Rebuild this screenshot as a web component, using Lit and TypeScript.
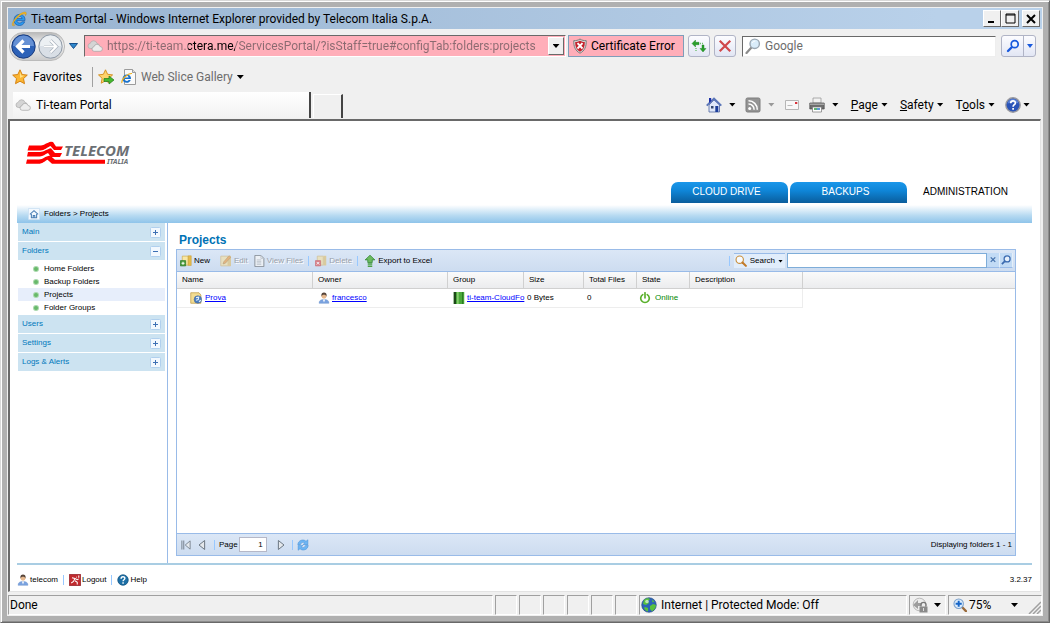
import { LitElement, html, svg, css, nothing } from "lit";
import { customElement, property } from "lit/decorators.js";
import { classMap } from "lit/directives/class-map.js";

const shapes: Record<string, unknown> = {
  ie: svg`<path d="M14 9.600H5.800c.2 1.600 1.300 2.400 2.800 2.400 1.100 0 1.900-.4 2.400-1.200h2.700c-.9 2.400-2.700 3.700-5.200 3.700-3.400 0-5.500-2.200-5.500-5.500s2.200-5.600 5.500-5.600c3.600 0 5.800 2.300 5.500 6.200zM5.900 7.600h5.200c-.2-1.400-1.200-2.100-2.500-2.100-1.400 0-2.400.8-2.700 2.100z" fill="#2b9af0" stroke="#0c4fa3" stroke-width=".6"/><path d="M1.600 14.600C.2 13 3.200 7.500 7.500 4 11 1.200 14.600.3 15.200 1.700c.4.9 0 2-.7 3 .1-1.300-.3-2-1.400-1.900C9.500 3.200 2.400 10 2.400 13.300c0 .8.8.9 2 .3-1.200 1.100-2.300 1.500-2.800 1z" fill="#f5b921" stroke="#b97c06" stroke-width=".3"/>`,
  cloud: svg`<path d="M1 8a2.500 2.500 0 0 1 2.200-2.600A3.500 3.500 0 0 1 10 5.500 2.500 2.500 0 0 1 9.500 10.500H3.500A2.500 2.500 0 0 1 1 8z" fill="#d4d4d4" stroke="#aaa" stroke-width=".7"/><path d="M5 11a2.300 2.300 0 0 1 2-2.300 3.100 3.100 0 0 1 6-.2 2.400 2.400 0 0 1 0 4.800H7.300A2.300 2.300 0 0 1 5 11z" fill="#ededed" stroke="#a4a4a4" stroke-width=".7"/>`,
  shield: svg`<path d="M8 1c2 1.400 4 1.700 6.200 1.600C14.600 8.500 12.500 13 8 15.200 3.500 13 1.400 8.500 1.800 2.600 4 2.700 6 2.400 8 1z" fill="#d5d5d5" stroke="#7c7c7c"/><path d="M8 2.700c1.600.9 3.100 1.200 4.800 1.200C13 8.500 11.300 11.900 8 13.700 4.700 11.900 3 8.500 3.200 3.900 4.900 3.900 6.400 3.600 8 2.700z" fill="#c4212b"/><path d="M5.500 5.200l5 5.300M10.500 5.200l-5 5.300" stroke="#fff" stroke-width="1.900"/>`,
  refresh: svg`<path d="M1 5.500L4.500 2v2.300H8v2.400H4.500V9z" fill="#2aa02a" stroke="#12791a" stroke-width=".4"/><path d="M15 10.500L12 14l-3-3.500h2V7h2v3.500z" fill="#2aa02a" stroke="#12791a" stroke-width=".4"/><path d="M9 5.500h3M5 10v4" stroke="#6fbf6f" stroke-width="1.400" stroke-dasharray="1 1"/>`,
  stop: svg`<path d="M3.500 3.500l9 9M12.500 3.500l-9 9" stroke="#d0484b" stroke-width="2.200" stroke-linecap="square"/>`,
  glass: svg`<path d="M1.500 15l4.700-5.200" stroke="#8c8c8c" stroke-width="2.200" stroke-linecap="round"/><circle cx="9.700" cy="5.800" r="4.700" fill="#d9ecfa" stroke="#9aa7b3" stroke-width="1.400"/><path d="M7.300 5a3 3 0 0 1 3-2" stroke="#fff" fill="none"/>`,
  blueglass: svg`<path d="M3 13l4-4" stroke="#1859dd" stroke-width="2.400" stroke-linecap="round"/><circle cx="9.700" cy="6.200" r="3.500" fill="#eef4ff" stroke="#1859dd" stroke-width="1.700"/>`,
  star: svg`<path d="M8 .8l2.200 4.700 5.100.6-3.800 3.500 1 5.100L8 12.200l-4.500 2.500 1-5.100L.7 6.100l5.100-.6z" fill="#fbb633" stroke="#d17a08" stroke-width=".9"/><path d="M8 3l1.300 3.400 3 .3L8 9z" fill="#ffe28a"/>`,
  addstar: svg`<path d="M7.500 .8l2.100 4.500 5 .6-3.700 3.400 1 4.900-4.400-2.400-4.300 2.400.9-4.900L.5 5.900l4.900-.6z" fill="#fdd36b" stroke="#d18b18" stroke-width=".9"/><path d="M6 9.500h5V7l5 4-5 4v-2.500H6z" fill="#46b82e" stroke="#23781b" stroke-width=".7"/>`,
  iepage: svg`<path d="M3.500.5h8l3 3v12h-11z" fill="#fafafa" stroke="#9b9b9b"/><path d="M11.500.5v3h3" fill="#ddd" stroke="#9b9b9b"/><path d="M10 10H3.700c.2 1.200 1 1.900 2.200 1.900.8 0 1.400-.3 1.700-.9h2.100c-.7 1.900-2.100 2.800-3.900 2.800-2.500 0-4.200-1.600-4.200-4.100s1.700-4.200 4.200-4.200c2.700 0 4.400 1.700 4.200 4.500zM3.800 8.500h3.800c-.2-.9-.9-1.400-1.800-1.400-1 0-1.700.5-2 1.400z" fill="#1a72cc"/><path d="M.9 14C0 10.500 7 4 11 4.500" stroke="#efb11c" fill="none" stroke-width="1.100"/>`,
  home: svg`<path d="M3 8l5-5 5.500 5v7H3z" fill="#dfe8fa" stroke="#4f65a0" stroke-width=".8"/><path d="M.7 8.600L8 1.600l7.300 7" fill="none" stroke="#5b76b8" stroke-width="1.900"/><path d="M3 1h2.200v3L3 6z" fill="#1c2fa8"/><path d="M9.300 9h3v6h-3z" fill="#1d3e9a"/><path d="M5 9h2.500v2.500H5z" fill="#34496f"/>`,
  rss: svg`<rect x="1" y="1" width="14" height="14" rx="1.500" fill="#949494" stroke="#7d7d7d"/><circle cx="4.700" cy="11.400" r="1.500" fill="#fff"/><path d="M3.500 7a5.500 5.500 0 0 1 5.600 5.700M3.500 3.800a8.700 8.700 0 0 1 8.800 8.900" fill="none" stroke="#fff" stroke-width="1.500"/>`,
  mail: svg`<path d="M1.500 3.500h13v9h-13z" fill="#f8f8f8" stroke="#b6b6b6"/><path d="M11 5h2.300v2H11z" fill="#d8323a"/><path d="M3.500 8.500h5" stroke="#bbb"/>`,
  printer: svg`<path d="M4 1h8v5H4z" fill="#f2f2f2" stroke="#999" stroke-width=".8"/><path d="M.8 6h14.400v6H.8z" fill="#6e6e6e" stroke="#4a4a4a" stroke-width=".7"/><path d="M1 6.500h14V8H1z" fill="#a5a5a5"/><path d="M3.500 10h9v5h-9z" fill="#fff" stroke="#777" stroke-width=".7"/><path d="M5 12h3" stroke="#2b9b45" stroke-width="1.500"/><path d="M8 12h3" stroke="#2a75c9" stroke-width="1.500"/>`,
  help: svg`<circle cx="8" cy="8" r="7.200" fill="#2a54b8" stroke="#9b9ba0" stroke-width="1.400"/><path d="M2.500 6.500a5.600 5.600 0 0 1 11 0c-3-1.500-8-1.500-11 0z" fill="#7fa3ea" opacity=".6"/><path d="M5.700 6.200c0-3.200 4.700-3 4.700-.3 0 1.900-2.300 1.700-2.300 3.800M8.100 11v1.800" fill="none" stroke="#fff" stroke-width="1.700"/>`,
  crumb: svg`<rect x=".5" y=".5" width="15" height="15" rx="1" fill="#f4f9fe" stroke="#c3dbf0"/><path d="M2.500 8.500L8 3.500l5.500 5M4.500 8v5h7V8M7 13v-3h2v3" fill="none" stroke="#4b7fb5" stroke-width="1.400"/>`,
  plus: svg`<rect x=".5" y=".5" width="10" height="10" rx="1" fill="#f2f8fe" stroke="#b1d0ee"/><path d="M3 5.500h5M5.500 3v5" stroke="#3c6fb4"/>`,
  minus: svg`<rect x=".5" y=".5" width="10" height="10" rx="1" fill="#f2f8fe" stroke="#b1d0ee"/><path d="M3 5.500h5" stroke="#3c6fb4"/>`,
  new: svg`<path d="M3 1.500h8v12H3z" fill="#f8e7a6" stroke="#c9a23b" stroke-width=".8"/><path d="M11 1h4v13h-4z" fill="#e6bb4a" stroke="#c29628" stroke-width=".6"/><path d="M.5 7.500h7v7h-7z" fill="#4a9c3c" stroke="#2f7a28"/><path d="M4 9v4M2 11h4" stroke="#fff" stroke-width="1.400"/>`,
  edit: svg`<path d="M1 1.500h13v13H1z" fill="#f0dfaa" stroke="#cbb277"/><path d="M10 1.500h4.500v13H10z" fill="#dcc17a"/><path d="M4 12l1-3 7-8 2.400 2-7.200 8z" fill="#e9a04e" stroke="#a98247" stroke-width=".7"/>`,
  file: svg`<path d="M2.500 .5h8l4 4v11h-12z" fill="#f6f6f6" stroke="#5f646a" stroke-width="1.200"/><path d="M10.500.5v4h4M5 6.500h6M5 8.500h6M5 10.500h6M5 12.500h6" fill="none" stroke="#a7acb3"/>`,
  del: svg`<path d="M3 1.500h8v12H3z" fill="#f1e0a8" stroke="#cbb277"/><path d="M11 1h4v13h-4z" fill="#dcc17a"/><path d="M.5 7.500h7v7h-7z" fill="#e0585c" stroke="#c3454a"/><path d="M2.300 9.300l3.400 3.400M5.700 9.300l-3.400 3.400" stroke="#fff" stroke-width="1.300"/>`,
  export: svg`<path d="M8 .3L14.500 6.500H11V10H5V6.500H1.500z" fill="#6cba60" stroke="#2f8530"/><path d="M5 12h6M5 15h6" stroke="#4aa043" stroke-width="2"/>`,
  search: svg`<circle cx="6.300" cy="6.300" r="4.900" fill="#f7fbff" stroke="#c98f3c" stroke-width="1.500"/><path d="M10 10l4.500 4.500" stroke="#c27a28" stroke-width="2.800" stroke-linecap="round"/>`,
  clear: svg`<path d="M5 4.500l6 6M11 4.500l-6 6" stroke="#4774ad" stroke-width="1.800"/>`,
  find: svg`<path d="M2.500 13.500l4-4" stroke="#3b6bb0" stroke-width="2.400"/><circle cx="9.500" cy="6.500" r="4" fill="#e5effb" stroke="#3b6bb0" stroke-width="1.700"/>`,
  project: svg`<path d="M1 1h11l2.500 3v11H1z" fill="#f2dc92" stroke="#bd9b45"/><circle cx="10.500" cy="10" r="5" fill="#4a7cc0" stroke="#49678f" stroke-width=".7"/><path d="M8 7.500l3.500-.5-.5 3-3 1M12 13l2.500-2" stroke="#e3eff8" stroke-width="1.500" fill="none"/>`,
  user: svg`<path d="M1.500 15c0-3.500 2-5 6.500-5s6.500 1.500 6.500 5z" fill="#7ba3e0" stroke="#5c86c5" stroke-width=".6"/><path d="M6.500 10L8 14l1.500-4z" fill="#fff"/><circle cx="8" cy="5.800" r="3.300" fill="#e7b98f"/><path d="M4.500 6C4 2 6 .8 8 .8S12 2 11.500 6c-.7-2-1.700-2.500-3.500-2.500S5.200 4 4.500 6z" fill="#574438"/>`,
  group: svg`<path d="M1 0h14v16H1z" fill="#4aa83a"/><path d="M1 0h3v16H1z" fill="#1d4718"/><path d="M5.500 0h2v16h-2z" fill="#8fd276"/><path d="M12 0h1.500v16H12z" fill="#2c7a25"/>`,
  power: svg`<path d="M5 3.500a5.700 5.700 0 1 0 6 0M8 1v7" fill="none" stroke="#59b02b" stroke-width="2.200" stroke-linecap="round"/>`,
  first: svg`<path d="M2.500 2v12M5 2v12" stroke="#7b8794" stroke-width="1.400"/><path d="M13.500 2.500v11L7 8z" fill="#e4e8ec" stroke="#75808c" stroke-width="1.200"/>`,
  prev: svg`<path d="M11.500 2v12L4 8z" fill="#e4e8ec" stroke="#69747f" stroke-width="1.300"/>`,
  next: svg`<path d="M4.500 2v12L12 8z" fill="#e4e8ec" stroke="#69747f" stroke-width="1.300"/>`,
  reload: svg`<path d="M1 7.500c.5-6 7.500-8 11-4.500L14.500 1v6.500H8l2.300-2.200C8.500 3.700 5.500 4.500 4.500 7.500z" fill="#6db5f3" stroke="#3b87d2" stroke-width=".6"/><path d="M15 8.500c-.5 6-7.500 8-11 4.500L1.500 15V8.500H8l-2.300 2.200c1.800 1.600 4.800.8 5.800-2.200z" fill="#6db5f3" stroke="#3b87d2" stroke-width=".6"/>`,
  logout: svg`<path d="M.5.5h15v15H.5z" fill="#c02a2e" stroke="#8e1a20"/><path d="M10 3.500v1M4 5l4 1 3 1.500 2-1M8 6l-2 4-3 2M8 9l3 2v3M13 2v3" stroke="#fff" stroke-width="1.400" fill="none"/>`,
  helpteal: svg`<circle cx="8" cy="8" r="7" fill="#1c6fa6" stroke="#11527f"/><path d="M5.500 6.200c0-3.300 5-3.200 5-.4 0 2-2.400 1.800-2.400 3.900M8.100 11v2" fill="none" stroke="#fff" stroke-width="1.900"/>`,
  globe: svg`<circle cx="8" cy="8" r="7.300" fill="#2c64b8" stroke="#1d3f7c" stroke-width=".6"/><path d="M3 3c2-2 5-2 6-1L7 4l1 2-3 2-3-1zM9 9l3-2 3 1c0 3-2 5-4 6.300L9 12zM4 10l3 1v3.500C5 14 3.500 12.500 3 11zM11 2.500l2.500 2-2 1z" fill="#58c23c"/><circle cx="6" cy="4.500" r="1.800" fill="#fff" opacity=".6"/>`,
  lock: svg`<circle cx="7.500" cy="7.500" r="6.300" fill="#ececec" stroke="#b9b9b9"/><path d="M1 8L6 3v3h4l-1 3H6v3z" fill="#9d9d9d"/><path d="M7.500 9.500h8v6h-8z" fill="#8a8a8a"/><path d="M9 9.500V7.800a2.500 2.500 0 0 1 5 0v1.700" fill="none" stroke="#777" stroke-width="1.300"/><path d="M11.500 11v3" stroke="#ddd"/>`,
  zoom: svg`<path d="M10 10l4.800 5" stroke="#9a6a3a" stroke-width="2.600" stroke-linecap="round"/><circle cx="6.500" cy="6.500" r="5.400" fill="#dcecfb" stroke="#7ba0cb" stroke-width="1.200"/><path d="M6.500 3v7M3 6.500h7" stroke="#1665c8" stroke-width="2.200"/>`,
};

const icon = (name: string, size = "s16") =>
  svg`<svg class="icon ${size}" viewBox=${size === "s11" ? "0 0 11 11" : "0 0 16 16"} fill="none" aria-hidden="true">${shapes[name]}</svg>`;

const base = css`
  * { box-sizing: border-box; }
  button, input { font: inherit; color: inherit; margin: 0; padding: 0; border: 0; background: none; border-radius: 0; outline: 0; min-width: 0; }
  button { display: flex; align-items: center; white-space: nowrap; text-align: left; }
  .icon { flex: none; display: block; }
  .s16 { width: 16px; height: 16px; }
  .s12 { width: 12px; height: 12px; }
  .s11 { width: 11px; height: 11px; }
  .caret { flex: none; width: 7px; height: 4px; background: currentColor; clip-path: polygon(0 0, 100% 0, 50% 100%); }
`;

@customElement("browser-chrome")
class BrowserChrome extends LitElement {
  static styles = [base, css`
    :host { display: block; flex: none; }
    .title { height: 21px; display: flex; align-items: center; gap: 4px; padding: 0 2px 0 3px; background: linear-gradient(90deg, #99b4d1, #b9d1ea 90%); }
    h1 { margin: 0; font: inherit; flex: 1; white-space: nowrap; }
    .win { display: flex; }
    .win button { width: 18px; height: 17px; justify-content: center; background: #f0f0f0; border: 1px solid; border-color: #fff #696969 #696969 #fff; }
    .win button:last-child { margin-left: 3px; }
    .nav { display: flex; align-items: center; height: 34px; padding: 0 6px 0 1px; }
    .travel { display: flex; align-items: center; width: 75px; }
    .pill { display: flex; gap: 2px; margin-right: 4px; padding: 1px; border: 1px solid #bbb; border-radius: 14px; background: linear-gradient(#bbb, #f2f2f2 40%, #ccc); }
    .round { width: 25px; height: 25px; }
    .address { flex: 1 1 482px; display: flex; align-items: center; height: 22px; padding: 0 1px 0 2px; gap: 4px; background: #ffaeb9; border: 1px solid; border-color: #696969 #fff #fff #696969; }
    .url { flex: 1; height: 18px; color: transparent; background: linear-gradient(90deg, #8a6a70 81px, #000 81px, #000 128px, #8a6a70 128px); background-clip: text; -webkit-background-clip: text; }
    .drop { width: 16px; height: 18px; justify-content: center; color: #000; background: #f0f0f0; border: 1px solid; border-color: #fff #696969 #696969 #fff; }
    .cert { width: 116px; height: 22px; gap: 3px; margin: 0 4px 0 2px; padding-left: 3px; background: #ffaeb9; border: 1px solid #7f9db9; }
    .sq { width: 22px; height: 22px; justify-content: center; margin-right: 4px; border: 1px solid #b0b4c6; border-radius: 3px; background: linear-gradient(#fcfcff, #e2e6f4); }
    .google { flex: 1 1 254px; display: flex; align-items: center; gap: 4px; height: 21px; margin: 0 5px 0 2px; padding-left: 2px; background: #fff; border: 1px solid; border-color: #696969 #eee #eee #696969; }
    .google input { flex: 1; }
    .google input::placeholder { color: #6d6d6d; opacity: 1; }
    .go { display: flex; height: 22px; color: #1859dd; border: 1px solid #b0b4c6; border-radius: 3px; background: linear-gradient(#fcfcff, #e2e6f4); }
    .go button { width: 21px; justify-content: center; }
    .go button + button { width: 12px; border-left: 1px solid #b0b4c6; }
    .favs { display: flex; align-items: center; height: 28px; padding-left: 4px; }
    .favs button { gap: 5px; }
    .rule { width: 1px; height: 20px; margin: 0 5px 0 10px; background: #a0a0a0; }
    .gallery { margin-left: 7px; color: #6d6d6d; }
    .favs .gallery { gap: 4px; }
    .gallery .caret { color: #000; }
    .bar { display: flex; align-items: flex-end; height: 28px; padding: 0 0 1px 5px; }
    .tab { width: 298px; height: 26px; gap: 5px; padding-left: 2px; background: linear-gradient(#fff, #f2f2f2); border-right: 2px solid #444; }
    .newtab { width: 30px; height: 24px; margin-left: 2px; border: 1px solid #fff; border-right: 2px solid #444; border-bottom: 0; }
    .menu { display: flex; align-items: center; align-self: center; margin-left: auto; padding: 0 12px 0 0; }
    .menu button { gap: 7px; margin-left: 9px; }
    .menu .tight { gap: 3px; margin-left: 12px; }
    .menu .help { gap: 2px; margin-left: 10px; }
    .off { color: #999; }
  `];
  render() {
    const caret = html`<span class="caret"></span>`;
    const disc = (on: boolean) => svg`<svg class="icon round" viewBox="0 0 25 25" fill="none"><circle cx="12.500" cy="12.500" r="11.700" fill=${on ? "#2d62b8" : "#d9dfe6"} stroke=${on ? "#1a3b7c" : "#8e99a6"}/><path d="M2 12a10.500 10.500 0 0 1 21 0z" fill=${on ? "#7da4df" : "#f4f6f8"} opacity=".7"/><path d=${on ? "M19 12.500H7M12.500 6.500l-6 6 6 6" : "M6 12.500h12M12.500 6.500l6 6-6 6"} stroke=${on ? "#fff" : "#a9b2bd"} stroke-width="3.200"/>${on ? nothing : svg`<path d="M6 12.500h12M12.500 6.500l6 6-6 6" stroke="#fff" stroke-width="1.900"/>`}</svg>`;
    return html`
      <div class="title">${icon("ie")}<h1>Ti-team Portal - Windows Internet Explorer provided by Telecom Italia S.p.A.</h1>
        <div class="win">
          <button aria-label="Minimize"><svg width="10" height="10"><path d="M1 8h6" stroke="#000" stroke-width="2"/></svg></button>
          <button aria-label="Maximize"><svg width="11" height="11"><path d="M1 1h9v9H1zM1 2h9" fill="none" stroke="#000"/></svg></button>
          <button aria-label="Close"><svg width="10" height="10"><path d="M1 1l8 8M9 1L1 9" stroke="#000" stroke-width="2"/></svg></button>
        </div>
      </div>
      <div class="nav">
        <div class="travel">
          <div class="pill"><button aria-label="Back">${disc(true)}</button><button aria-label="Forward">${disc(false)}</button></div>
          <button aria-label="Recent pages"><svg width="9" height="6"><path d="M.5.5h8L4.500 5.500z" fill="#2e87cc" stroke="#174f8c"/></svg></button>
        </div>
        <div class="address">${icon("cloud")}
          <input class="url" aria-label="Address" value="https://ti-team.ctera.me/ServicesPortal/?isStaff=true#configTab:folders:projects">
          <button class="drop" aria-label="Show addresses">${caret}</button>
        </div>
        <button class="cert">${icon("shield")}Certificate Error</button>
        <button class="sq" aria-label="Refresh">${icon("refresh")}</button>
        <button class="sq" aria-label="Stop">${icon("stop")}</button>
        <div class="google">${icon("glass")}<input aria-label="Search the web" placeholder="Google"></div>
        <div class="go"><button aria-label="Search">${icon("blueglass")}</button><button aria-label="Search options"><svg width="6" height="4"><path d="M0 0h6L3 4z" fill="#1859dd"/></svg></button></div>
      </div>
      <div class="favs">
        <button>${icon("star")}Favorites</button><span class="rule"></span>
        <button aria-label="Add to favorites bar">${icon("addstar")}</button>
        <button class="gallery">${icon("iepage")}Web Slice Gallery ${caret}</button>
      </div>
      <div class="bar">
        <button class="tab">${icon("cloud")}Ti-team Portal</button>
        <button class="newtab" aria-label="New tab"></button>
        <div class="menu">
          <button aria-label="Home">${icon("home")}${caret}</button>
          <button class="off" aria-label="Feeds">${icon("rss")}${caret}</button>
          <button aria-label="Read mail">${icon("mail")}</button>
          <button aria-label="Print">${icon("printer")}${caret}</button>
          <button class="tight"><span><u>P</u>age</span>${caret}</button>
          <button class="tight"><span><u>S</u>afety</span>${caret}</button>
          <button class="tight"><span>T<u>o</u>ols</span>${caret}</button>
          <button class="help" aria-label="Help">${icon("help")}${caret}</button>
        </div>
      </div>`;
  }
}

@customElement("portal-sidebar")
class PortalSidebar extends LitElement {
  @property({ attribute: false }) sections: { label: string; items?: string[] }[] = [];
  @property() current = "";
  static styles = [base, css`
    :host { display: block; flex: none; width: 151px; padding: 0 2px 0 1px; border-right: 1px solid #99bbe8; }
    nav { display: flex; flex-direction: column; gap: 1px; }
    .head { width: 100%; height: 18px; justify-content: space-between; padding: 0 4px; color: #0078bc; background: #cce3f1; }
    ul { list-style: none; margin: 0; padding: 2px 0 0; }
    a { display: flex; align-items: center; gap: 6px; height: 13px; padding-left: 16px; color: #000; text-decoration: none; }
    .on { background: #e7eefb; }
    i { width: 4px; height: 4px; border-radius: 50%; background: #67b96a; box-shadow: 0 0 0 1px #a9d8ac; }
  `];
  render() {
    return html`<nav>${this.sections.map((s) => html`<div>
      <button class="head" aria-expanded=${s.items ? "true" : "false"}>${s.label}${icon(s.items ? "minus" : "plus", "s11")}</button>
      ${s.items ? html`<ul>${s.items.map((t) => html`<li><a href="#" class=${classMap({ on: t === this.current })}><i></i>${t}</a></li>`)}</ul>` : nothing}
    </div>`)}</nav>`;
  }
}

@customElement("projects-panel")
class ProjectsPanel extends LitElement {
  static styles = [base, css`
    :host { flex: 1; min-width: 0; display: flex; flex-direction: column; padding: 8px 16px 7px 8px; }
    h2 { margin: 0 3px; font-size: 12px; line-height: 18px; color: #0072b5; }
    .panel { flex: 1; display: flex; flex-direction: column; border: 1px solid #99bbe8; }
    .tools { display: flex; align-items: center; height: 22px; padding: 0 2px 0 3px; background: linear-gradient(#dbe7f6, #cddcf0); border-bottom: 1px solid #99bbe8; }
    .tools button { gap: 2px; }
    .sep { width: 1px; height: 10px; margin: 0 6px 0 5px; background: #98c8ff; }
    .gap { margin-left: 5px; }
    .dim { color: #99a0aa; text-shadow: 1px 1px #fff; }
    .dim .icon { opacity: .7; }
    .query { display: flex; align-items: center; margin-left: auto; }
    .tools .kind { height: 15px; gap: 3px; padding: 0 2px 0 1px; background: #e1edfb; border-top: 1px solid #99bbe8; }
    .query .sep { margin-right: 4px; }
    .kind .caret { width: 5px; height: 3px; }
    .query input { width: 200px; height: 15px; margin-left: 2px; background: #fff; border: 1px solid #7eadd9; }
    .query .mini { height: 15px; background: #c2dbf5; border-bottom: 1px solid #99bbe8; border-right: 1px solid #e4effa; }
    .grid { flex: 1; background: #fff; }
    table { width: 100%; table-layout: fixed; border-collapse: separate; border-spacing: 0; }
    .c1 { width: 136px; } .c2 { width: 135px; } .c3 { width: 76px; } .c4 { width: 60px; } .c5 { width: 53px; } .c6 { width: 53px; } .c7 { width: 113px; }
    th { height: 17px; padding: 0 5px; font-weight: 400; text-align: left; white-space: nowrap; background: linear-gradient(#fafafa, #ebecee); border-right: 1px solid #d0d0d0; border-bottom: 1px solid #d0d0d0; }
    th:last-child { border-right: 0; }
    td { height: 19px; padding: 0 0 0 3px; white-space: nowrap; border-bottom: 1px solid #ededed; }
    td:nth-child(7) { border-right: 1px solid #ededed; }
    td:last-child { border: 0; }
    .cell { display: flex; align-items: center; gap: 2px; }
    .first { padding-left: 13px; }
    .first .cell { gap: 3px; }
    .pad { padding-left: 5px; }
    .cell a { color: #00f; }
    .state { padding-left: 2px; }
    .online { color: #080; gap: 4px; }
    .foot { display: flex; align-items: center; height: 22px; padding: 0 3px; background: linear-gradient(#dbe7f6, #cddcf0); border-top: 1px solid #99bbe8; }
    .foot > button { margin-right: 4px; }
    .foot .sep { margin: 0 4px 0 2px; }
    .page { display: flex; align-items: center; gap: 1px; }
    .page input { width: 28px; height: 15px; padding-right: 3px; text-align: right; background: #fff; border: 1px solid #b5b8c8; }
    .foot .next { margin: 0 3px 0 8px; }
    .foot p { margin: 0 0 0 auto; }
  `];
  render() {
    const cols = ["Name", "Owner", "Group", "Size", "Total Files", "State", "Description", ""];
    return html`<h2>Projects</h2>
      <div class="panel">
        <div class="tools">
          <button>${icon("new", "s12")}New</button><span class="gap"></span>
          <button class="dim gap">${icon("edit", "s12")}Edit</button>
          <button class="dim gap">${icon("file", "s12")}View Files</button><span class="sep"></span>
          <button class="dim">${icon("del", "s12")}Delete</button><span class="sep"></span>
          <button>${icon("export", "s12")}Export to Excel</button>
          <div class="query"><span class="sep"></span>
            <button class="kind">${icon("search", "s12")}Search<span class="caret"></span></button>
            <input aria-label="Search projects">
            <button class="mini" aria-label="Clear">${icon("clear", "s12")}</button><button class="mini" aria-label="Find">${icon("find", "s12")}</button>
          </div>
        </div>
        <div class="grid"><table>
          <colgroup>${cols.map((_, i) => html`<col class="c${i + 1}">`)}</colgroup>
          <thead><tr>${cols.map((c) => html`<th>${c}</th>`)}</tr></thead>
          <tbody><tr>
            <td class="first"><div class="cell">${icon("project", "s12")}<a href="#">Prova</a></div></td>
            <td class="pad"><div class="cell">${icon("user", "s12")}<a href="#">francesco</a></div></td>
            <td class="pad"><div class="cell">${icon("group", "s12")}<a href="#">ti-team-CloudFo</a></div></td>
            <td>0 Bytes</td><td>0</td>
            <td class="state"><div class="cell online">${icon("power", "s12")}Online</div></td><td></td><td></td>
          </tr></tbody>
        </table></div>
        <div class="foot">
          <button aria-label="First page">${icon("first", "s12")}</button>
          <button aria-label="Previous page">${icon("prev", "s12")}</button>
          <span class="sep"></span>
          <label class="page">Page<input value="1"></label>
          <button class="next" aria-label="Next page">${icon("next", "s12")}</button><span class="sep"></span>
          <button aria-label="Refresh list">${icon("reload", "s12")}</button>
          <p>Displaying folders 1 - 1</p>
        </div>
      </div>`;
  }
}

@customElement("app-root")
class AppRoot extends LitElement {
  static styles = [base, css`
    :host { display: flex; flex-direction: column; height: 100vh; box-sizing: border-box; overflow: hidden; padding: 6px; border: 1px solid; border-color: #d8d8d8 #696969 #696969 #d8d8d8; background: #b0b0b0; box-shadow: inset 1px 1px #fff, inset -1px -1px #8c8c8c; font: 12px/16px Roboto, "Noto Sans", sans-serif; color: #000; }
    .frame { flex: 1; min-height: 0; display: flex; flex-direction: column; background: #f0f0f0; border: 1px solid #f0f0f0; }
    .site { flex: 1; min-height: 0; display: flex; flex-direction: column; margin-right: 1px; padding: 0 8px 0 7px; background: #fff; border: solid; border-width: 2px 1px 1px 2px; border-color: #696969 #e3e3e3 #e3e3e3 #696969; font: 8px/12px "Liberation Sans", Arial, sans-serif; }
    header { display: flex; justify-content: space-between; align-items: flex-end; height: 84px; padding: 0 10px 2px 9px; }
    .logo { align-self: flex-start; width: 108px; height: 26px; margin-top: 20px; }
    .word { font: italic 700 15px "Noto Sans", sans-serif; }
    .sub { font: italic 700 7px "Noto Sans", sans-serif; }
    .tabs { display: flex; gap: 2px; font-size: 10px; }
    .tabs a { width: 117px; height: 21px; padding: 4px 6px 0 0; text-align: center; color: #fff; text-decoration: none; border-radius: 7px 7px 0 0; background: linear-gradient(#1a97ea, #0f86d8 40%, #0a5d9c); }
    .tabs .on { width: 113px; padding-right: 0; color: #000; background: none; }
    .crumbs { display: flex; align-items: center; gap: 4px; height: 18px; padding-left: 11px; background: linear-gradient(#fff, #b5d9f1 60%, #8fc4ea); }
    .work { flex: 1; min-height: 0; display: flex; }
    footer { display: flex; align-items: center; height: 28px; padding-top: 3px; border-top: 2px solid #a9cde3; }
    footer button, footer span { display: flex; align-items: center; gap: 1px; }
    .rule { width: 1px; height: 10px; margin: 0 5px; background: #98c8ff; }
    .ver { margin-left: auto; }
    .status { flex: none; display: flex; gap: 2px; height: 23px; padding-top: 3px; }
    .pane { display: flex; align-items: center; width: 22px; height: 20px; padding-left: 1px; white-space: nowrap; border: 1px solid; border-color: #a0a0a0 #fff #fff #a0a0a0; }
    .wide { flex: 1; }
    .zone { width: 268px; gap: 4px; }
    .safe { width: 37px; gap: 6px; padding-left: 2px; }
    .zoom { width: 94px; padding-left: 4px; }
    .zoom button { flex: 1; gap: 2px; }
    .zoom .caret { margin: 0 10px 0 auto; }
    .s14 { width: 14px; height: 14px; }
    .grip { align-self: flex-end; flex: none; }
  `];
  render() {
    return html`<div class="frame">
      <browser-chrome></browser-chrome>
      <main class="site">
        <header>
          <svg class="logo" viewBox="0 0 108 26" role="img" aria-label="Telecom Italia">
            <path d="M3 4.500h12C18 4.500 21 1.500 25 .8L27 1l3 4.500h7l-2 3.500h-7L24.500 5c-3 1-6 4.500-10 4.500H1.500z" fill="#f00"/>
            <path d="M2 11h12c4 0 7-3 11-3.700L29 12h7l-2 4h-9l-3-4c-3 1.200-5 3.500-8 3.500H1z" fill="#f00"/>
            <path d="M1 18.500h12c4 0 6-3.200 11-4l5 4.300h50v4H26l-4.500-4c-3 1.500-5 4-9 4H0z" fill="#f00"/>
            <text class="word" x="38" y="15" fill="#6b6f74">TELECOM</text><text class="sub" x="81" y="23" fill="#6b6f74">ITALIA</text>
          </svg>
          <nav class="tabs"><a href="#">CLOUD DRIVE</a><a href="#">BACKUPS</a><a href="#" class="on">ADMINISTRATION</a></nav>
        </header>
        <div class="crumbs">${icon("crumb", "s12")}<span>Folders &gt; Projects</span></div>
        <div class="work">
          <portal-sidebar current="Projects" .sections=${[
            { label: "Main" },
            { label: "Folders", items: ["Home Folders", "Backup Folders", "Projects", "Folder Groups"] },
            { label: "Users" }, { label: "Settings" }, { label: "Logs & Alerts" },
          ]}></portal-sidebar>
          <projects-panel></projects-panel>
        </div>
        <footer>
          <span>${icon("user", "s12")}telecom</span><i class="rule"></i>
          <button>${icon("logout", "s12")}Logout</button><i class="rule"></i>
          <button>${icon("helpteal", "s12")}Help</button><span class="ver">3.2.37</span>
        </footer>
      </main>
      <div class="status">
        <div class="pane wide">Done</div>
        ${[1, 2, 3, 4, 5, 6].map(() => html`<div class="pane"></div>`)}
        <div class="pane zone">${icon("globe")}Internet | Protected Mode: Off</div>
        <div class="pane safe">${icon("lock")}<span class="caret"></span></div>
        <div class="pane zoom"><button>${icon("zoom", "s14")}75%<span class="caret"></span></button>
          <svg class="grip" width="13" height="13"><path d="M1 13L13 1M5 13l8-8M9 13l4-4" stroke="#a0a0a0" stroke-width="1.500"/></svg></div>
      </div>
    </div>`;
  }
}
